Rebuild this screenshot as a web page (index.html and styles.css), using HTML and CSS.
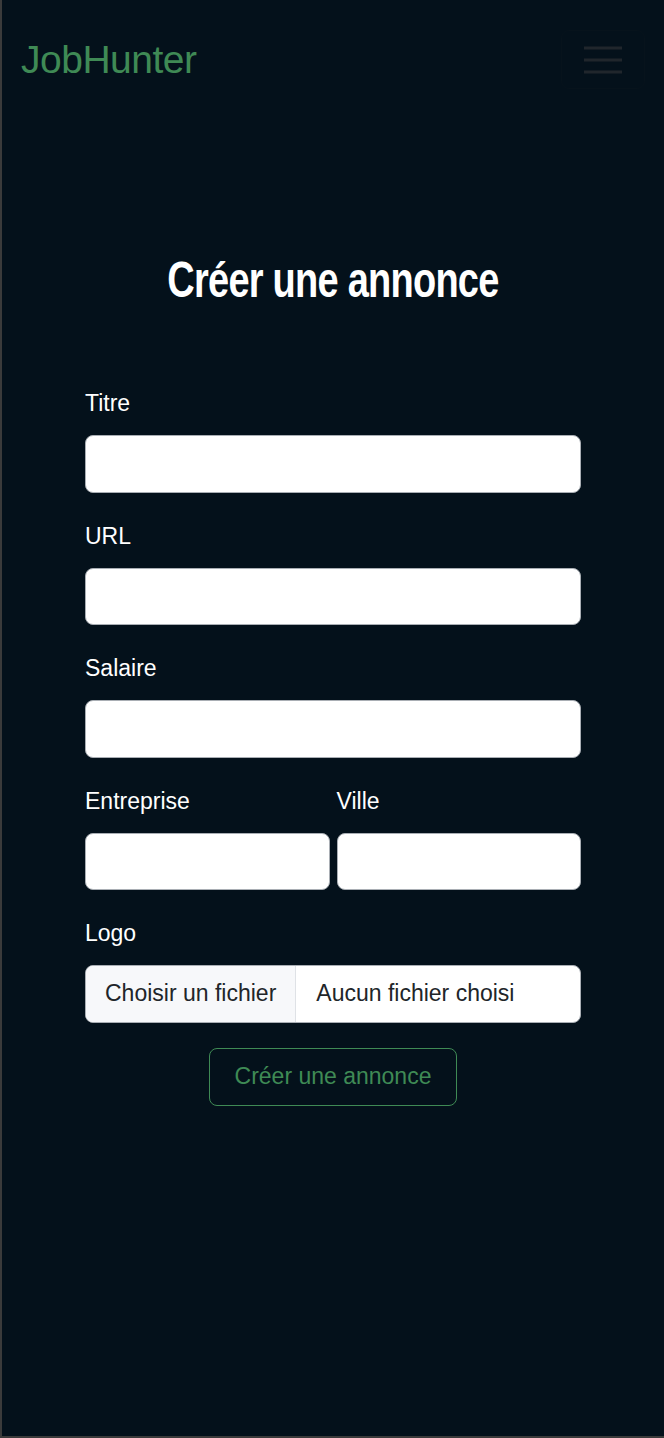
FILE: index.html
```html
<!DOCTYPE html>
<html lang="fr">
<head>
    <meta charset="utf-8">
    <meta name="viewport" content="width=device-width, initial-scale=1.0">
    <title>JobHunter - Créer une annonce</title>
    <link rel="stylesheet" href="styles.css">
</head>
<body>
    <nav class="navbar">
        <a class="navbar-brand" href="#">JobHunter</a>
        <button class="navbar-toggler" type="button" aria-label="Menu">
            <svg width="38" height="30" viewBox="0 0 38 30">
                <path d="M0 3h38M0 15h38M0 27h38" stroke="#20262c" stroke-width="3"/>
            </svg>
        </button>
    </nav>

    <main class="page">
        <h1 class="page-title"><span>Créer une annonce</span></h1>

        <form class="annonce-form">
            <div class="field">
                <label for="titre">Titre</label>
                <input type="text" id="titre" class="form-control">
            </div>
            <div class="field">
                <label for="url">URL</label>
                <input type="text" id="url" class="form-control">
            </div>
            <div class="field">
                <label for="salaire">Salaire</label>
                <input type="text" id="salaire" class="form-control">
            </div>
            <div class="field field-row">
                <div class="col">
                    <label for="entreprise">Entreprise</label>
                    <input type="text" id="entreprise" class="form-control">
                </div>
                <div class="col">
                    <label for="ville">Ville</label>
                    <input type="text" id="ville" class="form-control">
                </div>
            </div>
            <div class="field field-logo">
                <label for="logo">Logo</label>
                <div class="file-input" id="logo">
                    <span class="file-btn">Choisir un fichier</span>
                    <span class="file-name">Aucun fichier choisi</span>
                </div>
            </div>
            <div class="actions">
                <button type="button" class="btn-outline">Créer une annonce</button>
            </div>
        </form>
    </main>
</body>
</html>
```

FILE: styles.css
```css
html {
    height: 100%;
}

body {
    margin: 0;
    min-height: 100%;
    box-sizing: border-box;
    background-color: #04111b;
    border-left: 2px solid #3b3b3b;
    border-bottom: 2px solid #3b3b3b;
    font-family: "Liberation Sans", Arial, sans-serif;
    color: #fff;
}

.navbar {
    display: flex;
    justify-content: space-between;
    align-items: center;
    padding: 30px 19px 30px 19px;
}

.navbar-brand {
    color: #3f8a55;
    font-size: 39px;
    text-decoration: none;
    letter-spacing: -0.5px;
}

.navbar-toggler {
    display: flex;
    align-items: center;
    justify-content: center;
    width: 84px;
    height: 59px;
    padding: 0;
    background: transparent;
    border: 1px solid #07131c;
    border-radius: 8px;
}

.page {
    padding-top: 131px;
}

.page-title {
    margin: 0;
    text-align: center;
    font-family: "Liberation Sans", Arial, sans-serif;
    font-weight: bold;
    font-size: 50px;
    line-height: 60px;
    letter-spacing: -1px;
}

/* no condensed face installed, so squeeze the bold one */
.page-title span {
    display: inline-block;
    transform: scaleX(0.76);
}

.annonce-form {
    width: 496px;
    margin: 75px auto 0;
}

.field {
    margin-bottom: 25px;
}

.field label {
    display: block;
    font-size: 23px;
    line-height: 36px;
    margin-bottom: 14px;
}

.form-control {
    display: block;
    box-sizing: border-box;
    width: 100%;
    height: 57.5px;
    margin: 0;
    background: #fff;
    border: 1px solid #a9aeb4;
    border-radius: 8px;
    font-size: 23px;
}

.field-row {
    display: flex;
    gap: 7px;
}

.field-row .col {
    flex: 1;
}

.field-logo {
    margin-bottom: 25px;
}

.file-input {
    display: flex;
    box-sizing: border-box;
    height: 57.5px;
    background: #fff;
    border: 1px solid #a9aeb4;
    border-radius: 8px;
    overflow: hidden;
    font-size: 23px;
    color: #212529;
}

.file-btn {
    display: flex;
    align-items: center;
    padding: 0 19px;
    background: #f7f8fa;
    border-right: 1px solid #dfe2e6;
}

.file-name {
    display: flex;
    align-items: center;
    padding-left: 20px;
}

.actions {
    text-align: center;
}

.btn-outline {
    box-sizing: border-box;
    width: 248px;
    height: 58px;
    background: transparent;
    border: 1px solid #3f8a55;
    border-radius: 8px;
    color: #3f8a55;
    font-family: "Liberation Sans", Arial, sans-serif;
    font-size: 23px;
}
```
